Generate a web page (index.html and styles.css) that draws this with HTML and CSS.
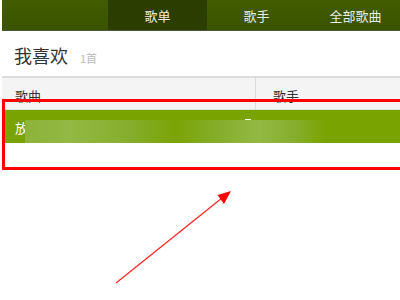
FILE: index.html
```html
<!DOCTYPE html>
<html lang="zh">
<head>
<meta charset="utf-8">
<link rel="stylesheet" href="styles.css">
</head>
<body>
<div class="page">
  <nav class="topbar">
    <div class="brand"></div>
    <a class="tab active">歌单</a>
    <a class="tab">歌手</a>
    <a class="tab">全部歌曲</a>
  </nav>
  <div class="title">
    <h1>我喜欢</h1>
    <span class="count">1首</span>
  </div>
  <div class="table">
    <div class="thead">
      <div class="th col-song">歌曲</div>
      <div class="th col-singer">歌手</div>
    </div>
    <div class="row selected">
      <div class="td col-song">放</div>
      <div class="td col-singer"><span class="dash"></span></div>
      <div class="blur"></div>
    </div>
    <div class="row empty"></div>
  </div>
  <div class="highlight"></div>
  <svg class="arrow" width="400" height="300" viewBox="0 0 400 300">
    <line x1="116" y1="283" x2="222" y2="198" stroke="#f22" stroke-width="1.2"/>
    <polygon points="231,191 217.5,195 224,204" fill="#ff0000"/>
  </svg>
</div>
</body>
</html>
```
FILE: styles.css
```css
html, body {
  margin: 0;
  padding: 0;
  background: #fff;
}
.page {
  position: relative;
  width: 400px;
  height: 300px;
  overflow: hidden;
  font-family: "Noto Sans CJK SC", "Noto Sans", sans-serif;
}
.topbar {
  display: flex;
  margin-left: 2px;
  height: 30px;
  background: linear-gradient(#415c00, #3a5300);
  border-bottom: 1px solid #4d5a3a;
}
.brand {
  width: 106px;
  flex: none;
}
.tab {
  flex: none;
  width: 99px;
  display: flex;
  align-items: center;
  justify-content: center;
  color: #e8eee0;
  font-size: 13px;
}
.tab.active {
  background: #2c3d00;
}
.title {
  display: flex;
  align-items: baseline;
  gap: 12px;
  padding: 12px 0 0 14px;
  height: 33px;
}
.title h1 {
  margin: 0;
  font-size: 18px;
  font-weight: normal;
  color: #333;
  line-height: 24px;
}
.count {
  font-size: 11px;
  color: #bbb;
}
.table {
  margin-left: 2px;
}
.thead {
  display: flex;
  height: 31px;
  background: #f4f4f4;
  border-top: 2px solid #dcdcdc;
  border-bottom: 1px solid #e2e2e2;
}
.col-song {
  width: 254px;
  flex: none;
  padding-left: 13px;
  box-sizing: border-box;
}
.col-singer {
  flex: 1;
  padding-left: 17px;
}
.th {
  font-size: 13px;
  color: #333;
  line-height: 13px;
  padding-top: 11px;
}
.th.col-song {
  border-right: 1px solid #dcdcdc;
}
.row {
  display: flex;
  height: 33px;
  position: relative;
}
.row.selected {
  background: #78a300;
}
.td {
  font-size: 13px;
  color: #fff;
  line-height: 13px;
  padding-top: 11px;
}
.dash {
  display: block;
  width: 6px;
  height: 2px;
  background: #fff;
  margin-left: -28px;
  margin-top: -2px;
}
.blur {
  position: absolute;
  left: 23px;
  top: 10px;
  width: 300px;
  height: 23px;
  background: linear-gradient(90deg, #8db33a 0%, #93b843 15%, #86ad2c 35%, #7aa406 50%, #86ad2c 65%, #94b944 78%, #86ad2c 90%, #7aa402 100%);
}
.row.empty {
  height: 30px;
}
.highlight {
  position: absolute;
  left: 2px;
  top: 99px;
  width: 410px;
  height: 65px;
  border: 3px solid #ff0000;
}
.arrow {
  position: absolute;
  left: 0;
  top: 0;
}
```
